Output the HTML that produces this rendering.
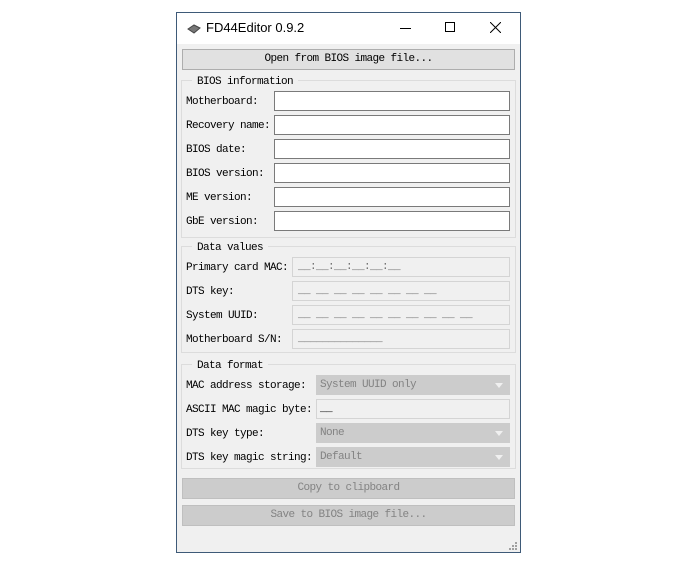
<!DOCTYPE html>
<html><head><style>
*{margin:0;padding:0;box-sizing:border-box}
body{width:696px;height:564px;background:#fff;position:relative;overflow:hidden;font-family:"Liberation Mono","DejaVu Sans Mono",monospace;font-size:11px;letter-spacing:-0.6px;color:#000}
.win{position:absolute;left:176px;top:12px;width:345px;height:541px;border:1px solid #3e5a78;background:#f0f0f0}
.tb{position:absolute;left:0;top:0;width:343px;height:31px;background:#fff}
.title{position:absolute;left:29px;top:7px;font-family:"Liberation Sans",sans-serif;font-size:13px;letter-spacing:0;color:#000}
.a{position:absolute}
.btn{position:absolute;left:5px;width:333px;height:21px;background:#e1e1e1;border:1px solid #adadad;text-align:center;line-height:19px}
.btn.dis{background:#cccccc;border-color:#bfbfbf;color:#838383}
.grp{position:absolute;left:4px;width:335px;border:1px solid #dcdcdc}
.gt{position:absolute;left:10px;top:-6px;background:#f0f0f0;padding:0 5px;line-height:14px}
.lbl{position:absolute;left:9px;line-height:14px}
.in{position:absolute;height:20px;background:#fff;border:1px solid #7a7a7a}
.ro{position:absolute;height:20px;background:#f0f0f0;border:1px solid #d4d4d4;color:#6d6d6d;padding-left:5px;line-height:19px}
.cb{position:absolute;width:194px;height:20px;background:#cccccc;border:1px solid #cccccc;color:#838383;padding-left:3px;line-height:19px}
.cb:after{content:"";position:absolute;right:6px;top:7px;border-left:4px solid transparent;border-right:4px solid transparent;border-top:5px solid #f0f0f0}
</style></head><body>
<div class="win">
<div class="tb">
<svg class="a" style="left:10px;top:11px" width="14" height="10"><path d="M1 5 L7 1 L13 4 L7 9 Z" fill="#777" stroke="#444"/></svg>
<div class="title">FD44Editor 0.9.2</div>
<div class="a" style="left:223px;top:15px;width:11px;height:1px;background:#000"></div>
<div class="a" style="left:268px;top:9px;width:10px;height:10px;border:1px solid #000"></div>
<svg class="a" style="left:313px;top:9px" width="11" height="11"><path d="M0 0L11 11M11 0L0 11" stroke="#000" stroke-width="1"/></svg>
</div>
<div class="btn" style="top:36px">Open from BIOS image file...</div>

<div class="grp" style="top:67px;height:158px">
<div class="gt">BIOS information</div>
<div class="lbl" style="top:14px;left:4px">Motherboard:</div><div class="in" style="left:92px;top:10px;width:236px"></div>
<div class="lbl" style="top:38px;left:4px">Recovery name:</div><div class="in" style="left:92px;top:34px;width:236px"></div>
<div class="lbl" style="top:62px;left:4px">BIOS date:</div><div class="in" style="left:92px;top:58px;width:236px"></div>
<div class="lbl" style="top:86px;left:4px">BIOS version:</div><div class="in" style="left:92px;top:82px;width:236px"></div>
<div class="lbl" style="top:110px;left:4px">ME version:</div><div class="in" style="left:92px;top:106px;width:236px"></div>
<div class="lbl" style="top:134px;left:4px">GbE version:</div><div class="in" style="left:92px;top:130px;width:236px"></div>
</div>

<div class="grp" style="top:233px;height:107px">
<div class="gt">Data values</div>
<div class="lbl" style="top:14px;left:4px">Primary card MAC:</div><div class="ro" style="left:110px;top:10px;width:218px">__:__:__:__:__:__</div>
<div class="lbl" style="top:38px;left:4px">DTS key:</div><div class="ro" style="left:110px;top:34px;width:218px">__ __ __ __ __ __ __ __</div>
<div class="lbl" style="top:62px;left:4px">System UUID:</div><div class="ro" style="left:110px;top:58px;width:218px">__ __ __ __ __ __ __ __ __ __</div>
<div class="lbl" style="top:86px;left:4px">Motherboard S/N:</div><div class="ro" style="left:110px;top:82px;width:218px">______________</div>
</div>

<div class="grp" style="top:351px;height:105px">
<div class="gt">Data format</div>
<div class="lbl" style="top:14px;left:4px">MAC address storage:</div><div class="cb" style="left:134px;top:10px">System UUID only</div>
<div class="lbl" style="top:38px;left:4px">ASCII MAC magic byte:</div><div class="ro" style="left:134px;top:34px;width:194px;color:#000;padding-left:3px">__</div>
<div class="lbl" style="top:62px;left:4px">DTS key type:</div><div class="cb" style="left:134px;top:58px">None</div>
<div class="lbl" style="top:86px;left:4px">DTS key magic string:</div><div class="cb" style="left:134px;top:82px">Default</div>
</div>

<div class="btn dis" style="top:465px">Copy to clipboard</div>
<div class="btn dis" style="top:492px">Save to BIOS image file...</div>
<svg class="a" style="left:332px;top:529px" width="9" height="9"><g fill="#a0a0a0"><rect x="6" y="0" width="2" height="2"/><rect x="3" y="3" width="2" height="2"/><rect x="6" y="3" width="2" height="2"/><rect x="0" y="6" width="2" height="2"/><rect x="3" y="6" width="2" height="2"/><rect x="6" y="6" width="2" height="2"/></g></svg>
</div>
</body></html>
